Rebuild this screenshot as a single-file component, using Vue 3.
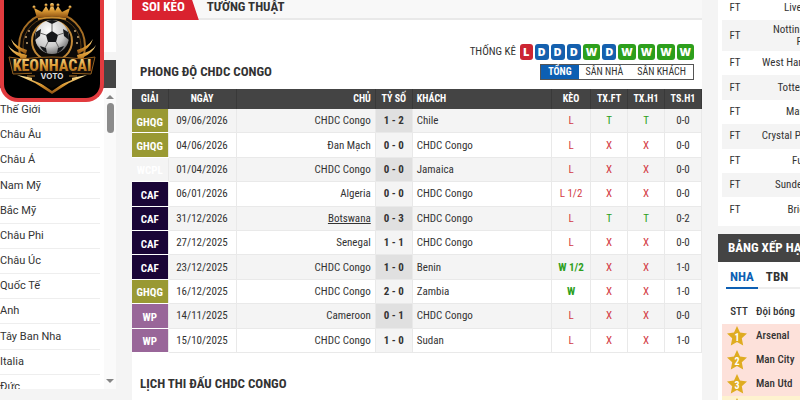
<script setup>
import { ref } from "vue";

const regions = [
  "Thế Giới",
  "Châu Âu",
  "Châu Á",
  "Nam Mỹ",
  "Bắc Mỹ",
  "Châu Phi",
  "Châu Úc",
  "Quốc Tế",
  "Anh",
  "Tây Ban Nha",
  "Italia",
  "Đức",
];

const form = ["L", "D", "D", "D", "W", "D", "W", "W", "W", "W"];
const filters = ["TỔNG", "SÂN NHÀ", "SÂN KHÁCH"];
const filter = ref("TỔNG");

const matches = [
  { cup: "GHQG", date: "09/06/2026", home: "CHDC Congo", score: "1 - 2", away: "Chile", odds: "L", ft: "T", h1: "T", half: "0-0" },
  { cup: "GHQG", date: "04/06/2026", home: "Đan Mạch", score: "0 - 0", away: "CHDC Congo", odds: "L", ft: "X", h1: "X", half: "0-0" },
  { cup: "WCPL", date: "01/04/2026", home: "CHDC Congo", score: "0 - 0", away: "Jamaica", odds: "L", ft: "X", h1: "X", half: "0-0" },
  { cup: "CAF", date: "06/01/2026", home: "Algeria", score: "0 - 0", away: "CHDC Congo", odds: "L 1/2", ft: "X", h1: "X", half: "0-0" },
  { cup: "CAF", date: "31/12/2026", home: "Botswana", score: "0 - 3", away: "CHDC Congo", odds: "L", ft: "T", h1: "T", half: "0-2", link: true },
  { cup: "CAF", date: "27/12/2025", home: "Senegal", score: "1 - 1", away: "CHDC Congo", odds: "L", ft: "X", h1: "X", half: "0-0" },
  { cup: "CAF", date: "23/12/2025", home: "CHDC Congo", score: "1 - 0", away: "Benin", odds: "W 1/2", ft: "X", h1: "X", half: "1-0" },
  { cup: "GHQG", date: "16/12/2025", home: "CHDC Congo", score: "2 - 0", away: "Zambia", odds: "W", ft: "X", h1: "X", half: "1-0" },
  { cup: "WP", date: "14/11/2025", home: "Cameroon", score: "0 - 1", away: "CHDC Congo", odds: "L", ft: "X", h1: "X", half: "0-0" },
  { cup: "WP", date: "15/10/2025", home: "CHDC Congo", score: "1 - 0", away: "Sudan", odds: "L", ft: "X", h1: "X", half: "1-0" },
];

const results = [
  "Liverpool",
  "Nottingham Forest",
  "West Ham Utd",
  "Tottenham",
  "Man City",
  "Crystal Palace",
  "Fulham",
  "Sunderland",
  "Brighton",
];

const leagues = ["NHA", "TBN", "ITA"];
const league = ref("NHA");
const standings = ["Arsenal", "Man City", "Man Utd", "Aston Villa"];
</script>

<template>
  <div class="page">
    <aside class="left">
      <div class="blank"></div>
      <div class="bar"></div>
      <nav class="regions">
        <div class="list">
          <a v-for="r in regions" :key="r" href="#">{{ r }}</a>
        </div>
        <div class="scroll">
          <svg width="8" height="4" viewBox="0 0 8 4"><path d="M0 4L4 0L8 4Z" fill="#858585" /></svg>
          <span class="thumb"></span>
          <svg width="8" height="4" viewBox="0 0 8 4"><path d="M0 0L4 4L8 0Z" fill="#858585" /></svg>
        </div>
      </nav>
    </aside>

    <main class="main">
      <nav class="tabs">
        <a class="on" href="#">SOI KÈO</a>
        <a href="#">TƯỜNG THUẬT</a>
      </nav>
      <header class="head">
        <h2>PHONG ĐỘ CHDC CONGO</h2>
        <div class="tools">
          <div class="form">
            <span class="label">THỐNG KÊ</span>
            <span v-for="(f, i) in form" :key="i" class="chip" :class="f">{{ f }}</span>
          </div>
          <div class="filters">
            <button
              v-for="f in filters"
              :key="f"
              type="button"
              :class="{ on: f === filter }"
              @click="filter = f"
            >
              {{ f }}
            </button>
          </div>
        </div>
      </header>
      <table class="matches">
        <colgroup>
          <col class="c-cup" />
          <col class="c-date" />
          <col />
          <col class="c-num" />
          <col />
          <col class="c-odds" />
          <col class="c-num" />
          <col class="c-num" />
          <col class="c-num" />
        </colgroup>
        <thead>
          <tr>
            <th>GIẢI</th>
            <th>NGÀY</th>
            <th class="home">CHỦ</th>
            <th>TỶ SỐ</th>
            <th class="away">KHÁCH</th>
            <th>KÈO</th>
            <th>TX.FT</th>
            <th>TX.H1</th>
            <th>TS.H1</th>
          </tr>
        </thead>
        <tbody>
          <tr v-for="m in matches" :key="m.date">
            <td class="cup" :class="m.cup">{{ m.cup }}</td>
            <td>{{ m.date }}</td>
            <td class="home">
              <a v-if="m.link" href="#">{{ m.home }}</a>
              <template v-else>{{ m.home }}</template>
            </td>
            <td class="score">{{ m.score }}</td>
            <td class="away">{{ m.away }}</td>
            <td :class="m.odds[0] === 'W' ? 'win' : 'bad'">{{ m.odds }}</td>
            <td :class="m.ft === 'T' ? 'good' : 'bad'">{{ m.ft }}</td>
            <td :class="m.h1 === 'T' ? 'good' : 'bad'">{{ m.h1 }}</td>
            <td>{{ m.half }}</td>
          </tr>
        </tbody>
      </table>
      <h2 class="next">LỊCH THI ĐẤU CHDC CONGO</h2>
    </main>

    <aside class="right">
      <section class="card results">
        <table>
          <tbody>
            <tr v-for="t in results" :key="t">
              <td class="ft">FT</td>
              <td class="team">{{ t }}</td>
              <td></td>
            </tr>
          </tbody>
        </table>
      </section>
      <section class="card">
        <h3>BẢNG XẾP HẠNG</h3>
        <div class="leagues">
          <button
            v-for="l in leagues"
            :key="l"
            type="button"
            :class="{ on: l === league }"
            @click="league = l"
          >
            {{ l }}
          </button>
        </div>
        <table class="standings">
          <thead>
            <tr>
              <th class="rank">STT</th>
              <th>Đội bóng</th>
            </tr>
          </thead>
          <tbody>
            <tr v-for="(t, i) in standings" :key="t" :class="{ second: i > 2 }">
              <td class="rank">
                <svg width="20" height="20" viewBox="0 0 20 20">
                  <path d="M10 0L13 6.6L20 7.4L14.8 12.2L16.2 19.5L10 16L3.8 19.5L5.2 12.2L0 7.4L7 6.6Z" fill="#dfac21" />
                  <text x="10" y="14.5" text-anchor="middle">{{ i + 1 }}</text>
                </svg>
              </td>
              <td>{{ t }}</td>
            </tr>
          </tbody>
        </table>
      </section>
    </aside>

    <a class="logo" href="#" aria-label="KEONHACAI VOTO">
      <svg width="96" height="98" viewBox="0 0 96 98">
        <defs>
          <linearGradient id="gold" x1="0" y1="0" x2="0" y2="1">
            <stop offset="0" stop-color="#ffe8a0" />
            <stop offset="0.5" stop-color="#dc9b34" />
            <stop offset="1" stop-color="#8a4d10" />
          </linearGradient>
          <radialGradient id="ball" cx="0.4" cy="0.3" r="0.8">
            <stop offset="0" stop-color="#fff" />
            <stop offset="0.6" stop-color="#ccc" />
            <stop offset="1" stop-color="#555" />
          </radialGradient>
        </defs>
        <circle cx="48" cy="46" r="33" fill="#0c0a08" stroke="#a56e25" stroke-width="2" />
        <circle cx="48" cy="46" r="29" fill="none" stroke="#5d3d16" />
        <circle cx="48" cy="41" r="20" fill="none" stroke="#c38a38" stroke-width="2" />
        <g fill="url(#gold)">
          <path d="M4 45Q7 53 18 58L5 58Q9 61 14 61L8 62L21 64L23 55Q8 52 4 45Z" />
          <path d="M7 39Q10 49 22 54L23 50Q12 47 7 39Z" />
          <path d="M92 45Q89 53 78 58L91 58Q87 61 82 61L88 62L75 64L73 55Q88 52 92 45Z" />
          <path d="M89 39Q86 49 74 54L73 50Q84 47 89 39Z" />
          <path d="M33 18L30 8L38 12L42 6L45 11L48 3L51 11L54 6L58 12L66 8L63 18Q48 15 33 18Z" />
          <circle cx="30" cy="7" r="1.5" />
          <circle cx="42" cy="5" r="1.5" />
          <circle cx="48" cy="5" r="2" />
          <circle cx="54" cy="5" r="1.5" />
          <circle cx="66" cy="7" r="1.5" />
        </g>
        <path d="M34 19Q48 16 62 19" fill="none" stroke="#c98d31" stroke-width="2" />
        <g fill="#c8a977">
          <circle cx="25" cy="31" r="1" />
          <circle cx="22" cy="37" r="1" />
          <circle cx="23" cy="43" r="1" />
          <circle cx="71" cy="31" r="1" />
          <circle cx="74" cy="37" r="1" />
          <circle cx="73" cy="43" r="1" />
        </g>
        <circle cx="48" cy="37" r="17" fill="url(#ball)" />
        <g fill="#16181b">
          <path d="M48 31L54 35L52 42L44 42L42 35Z" />
          <path d="M42 21L48 24L54 21Q48 19 42 21Z" />
          <path d="M32 32L37 29L36 36L31 40Q31 35 32 32Z" />
          <path d="M64 32L59 29L60 36L65 40Q65 35 64 32Z" />
          <path d="M36 46L42 48L43 53Q38 51 36 46Z" />
          <path d="M60 46L54 48L53 53Q58 51 60 46Z" />
        </g>
        <path d="M48 31V24M54 35L60 33M52 42L55 48M44 42L41 48M42 35L36 33" fill="none" stroke="#666" />
        <path d="M5 57L18 59Q48 55 78 59L91 57L87 74Q48 71 9 74Z" fill="#120d08" stroke="#94601f" />
        <path d="M13 75L29 78L48 91L67 78L83 75L65 83L48 94L31 83Z" fill="url(#gold)" />
        <path d="M28 72H68V80L48 88L28 80Z" fill="#080706" />
        <text x="48" y="71" text-anchor="middle" class="word">KEONHACAI</text>
        <path d="M23 76H31M65 76H73" stroke="#b57a2c" />
        <text x="48" y="79" text-anchor="middle" class="sub">VOTO</text>
      </svg>
    </a>
  </div>
</template>

<style>
body {
  margin: 0;
  background: #f4f4f4;
}
</style>

<style scoped>
.page {
  position: relative;
  display: grid;
  grid-template-columns: 116px minmax(0, 1fr) 82px;
  column-gap: 16px;
  height: 100vh;
  overflow: hidden;
  background: #f4f4f4;
  color: #333;
  font-family: "Roboto Condensed", Roboto, sans-serif;
  font-size: 11px;
  line-height: 16px;
}
a {
  color: inherit;
  text-decoration: none;
}
button {
  border: 0;
  background: none;
  font: inherit;
  color: inherit;
  cursor: pointer;
}
h2,
h3 {
  margin: 0;
  font-weight: 700;
}
h2 {
  font-size: 13px;
}
table {
  width: 100%;
  border-collapse: collapse;
}
.left {
  font-family: Roboto, sans-serif;
}
.blank {
  height: 52px;
  margin-bottom: 8px;
  background: #fff;
}
.bar {
  height: 28px;
  background: #444;
}
.regions {
  display: flex;
  height: 301px;
  overflow: hidden;
  background: #fff;
}
.list {
  flex: 1;
  display: grid;
  grid-template-rows: repeat(12, 1fr);
  height: 302px;
  padding-top: 10px;
  margin-right: 4px;
}
.list a {
  display: flex;
  align-items: center;
  border-bottom: 1px solid #eee;
}
.scroll {
  display: flex;
  flex-direction: column;
  align-items: center;
  width: 12px;
  padding: 7px 0 6px;
  background: #fafafa;
}
.thumb {
  width: 7px;
  height: 30px;
  margin: 4px 0 auto;
  border-radius: 4px;
  background: #8b8b8b;
}
.main {
  background: #fff;
}
.tabs {
  display: flex;
  height: 18px;
  border-bottom: 2px solid #e9e9e9;
  background: #f8f8f8;
  font-size: 13px;
  font-weight: 700;
  line-height: 14px;
}
.tabs a {
  padding: 0 8px;
}
.tabs .on {
  height: 20px;
  padding: 0 14px 0 10px;
  background: #d9222f;
  color: #fff;
  clip-path: polygon(0 0, 90% 0, 100% 100%, 0 100%);
}
.head {
  display: flex;
  justify-content: space-between;
  align-items: flex-end;
  padding: 24px 8px 9px;
}
.tools {
  display: flex;
  flex-direction: column;
  align-items: flex-end;
  gap: 4px;
}
.form {
  display: flex;
  gap: 2px;
}
.label {
  margin-right: 2px;
}
.chip {
  padding: 0 3px;
  border-radius: 3px;
  color: #fff;
  font-family: "Open Sans", sans-serif;
  font-weight: 800;
}
.chip.L {
  background: #cc2633;
}
.chip.D {
  background: #1560ae;
}
.chip.W {
  background: #2d9f1c;
}
.filters {
  display: flex;
  border: 1px solid #555;
  font-size: 10px;
}
.filters button {
  padding: 0 7px;
  line-height: 14px;
}
.filters .on {
  background: #0d5fb3;
  color: #fff;
  font-weight: 700;
}
.matches {
  height: 264px;
  table-layout: fixed;
  text-align: center;
}
.c-cup {
  width: 36px;
}
.c-date {
  width: 68px;
}
.c-odds {
  width: 39px;
}
.c-num {
  width: 37px;
}
.matches th,
.matches td {
  padding: 0;
  white-space: nowrap;
}
.matches th {
  height: 20px;
  border-right: 1px solid #393939;
  background: #444;
  color: #fff;
  font-size: 10px;
  font-weight: 700;
}
.matches td {
  padding-top: 1px;
  border-right: 1px solid #e9e9e9;
  border-bottom: 1px solid #e9e9e9;
}
.matches tbody tr:nth-child(odd) {
  background: #f4f4f4;
}
.matches .home {
  padding-right: 4px;
  text-align: right;
}
.matches .home a {
  text-decoration: underline;
}
.matches .away {
  padding-left: 4px;
  text-align: left;
}
.matches .cup {
  padding-top: 4px;
  border-bottom-color: #fff;
  color: #fff;
  font-weight: 700;
}
.GHQG {
  background: #999933;
}
.CAF {
  background: #1a0537;
}
.WP {
  background: #996699;
}
.matches .score {
  background: #f4f4f4;
  font-weight: 700;
}
.matches tr:nth-child(odd) .score {
  background: #e0e0e0;
}
.bad {
  color: #d33b45;
}
.good {
  color: #2d9f1c;
}
.win {
  color: #2d9f1c;
  font-weight: 700;
}
.next {
  padding: 23px 8px 0;
}
.card {
  width: 240px;
  background: #fff;
}
.results {
  height: 226px;
  margin-bottom: 8px;
  overflow: hidden;
}
.results table {
  width: 236px;
  height: 226px;
  margin: -4px 0 0 4px;
  table-layout: fixed;
}
.results td {
  height: 18px;
  padding: 3px 0;
  line-height: 12px;
}
.results tr:nth-child(even) {
  background: #f4f4f4;
}
.results .ft {
  width: 26px;
  text-align: center;
}
.results .team {
  width: 64px;
  padding-left: 12px;
  text-align: right;
}
h3 {
  padding: 6px 10px;
  background: #444;
  color: #fff;
  font-size: 13px;
}
.leagues {
  display: flex;
  margin: 5px 8px 0;
  border-bottom: 2px solid #eee;
  font-size: 13px;
}
.leagues button {
  padding: 2px 4px;
  margin: 0 4px -2px 0;
  border-bottom: 2px solid transparent;
  font-weight: 700;
}
.leagues .on {
  border-bottom-color: #0d5fb3;
  color: #0d5fb3;
}
.standings {
  width: 232px;
  margin: 11px 4px 0;
  text-align: left;
}
.standings th,
.standings td {
  height: 24px;
  padding: 0;
  font-weight: 500;
}
.standings .rank {
  width: 34px;
  text-align: center;
}
.standings td.rank {
  padding-right: 4px;
  width: 30px;
}
.standings tbody tr {
  background: #fde1da;
}
.standings tbody .second {
  background: #fef2cf;
}
.standings svg {
  display: block;
  margin: 0 auto;
}
.standings text {
  fill: #fff;
  font-size: 10px;
  font-weight: 700;
}
.logo {
  position: absolute;
  top: 0;
  left: 0;
  border: 4px solid #e23b3f;
  border-top: 0;
  border-radius: 0 0 18px 18px;
  background: #000;
}
.logo svg {
  display: block;
}
.word {
  fill: url(#gold);
  font-family: "Roboto Condensed", Roboto, sans-serif;
  font-size: 16px;
  font-weight: 800;
}
.sub {
  fill: #ddd;
  font-family: Inter, sans-serif;
  font-size: 8px;
  font-weight: 700;
}
</style>
